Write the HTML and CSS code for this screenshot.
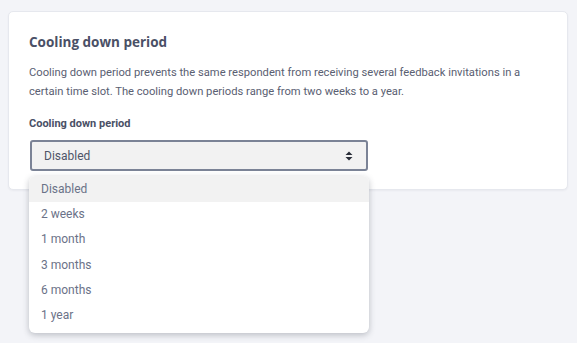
FILE: index.html
```html
<!DOCTYPE html>
<html>
<head>
<meta charset="utf-8">
<link rel="stylesheet" href="styles.css">
</head>
<body>
<div class="page">
  <section class="card">
    <h2 class="title">Cooling down period</h2>
    <p class="desc">Cooling down period prevents the same respondent from receiving several feedback invitations in a certain time slot. The cooling down periods range from two weeks to a year.</p>
    <div class="field">
      <label class="label">Cooling down period</label>
      <div class="select-wrap">
        <div class="select">
          <span class="select-value">Disabled</span>
          <svg class="caret" width="8" height="10" viewBox="0 0 8 10"><path d="M4 0.5L7.5 4H0.5Z M4 9.5L7.5 6H0.5Z" fill="#2b2f3a"/></svg>
        </div>
        <ul class="menu">
          <li class="opt active">Disabled</li>
          <li class="opt">2 weeks</li>
          <li class="opt">1 month</li>
          <li class="opt">3 months</li>
          <li class="opt">6 months</li>
          <li class="opt">1 year</li>
        </ul>
      </div>
    </div>
  </section>
</div>
</body>
</html>
```

FILE: styles.css
```css
html, body {
  margin: 0;
  padding: 0;
  background: #f3f4f8;
  height: 100%;
}
.page {
  padding: 11px 9px 0 8px;
}
.card {
  background: #fff;
  border: 1px solid #e6e8ee;
  border-radius: 5px;
  box-shadow: 0 1px 2px rgba(30, 40, 70, 0.05);
  padding: 21px 20px 18px 20px;
  height: 138px;
}
.title {
  margin: 0;
  font-family: "Open Sans", sans-serif;
  font-weight: 700;
  font-size: 13.5px;
  line-height: 18px;
  color: #4a5066;
}
.desc {
  margin: 12px 0 0 0;
  max-width: 500px;
  font-family: Roboto, sans-serif;
  font-size: 11.2px;
  line-height: 19px;
  color: #5a6072;
}
.field {
  margin-top: 16px;
}
.label {
  display: block;
  font-family: Roboto, sans-serif;
  font-weight: 700;
  font-size: 11px;
  line-height: 14px;
  color: #4a5066;
}
.select-wrap {
  position: relative;
  margin-top: 9px;
  width: 339px;
}
.select {
  box-sizing: border-box;
  height: 31px;
  border: 2px solid #7b8396;
  border-radius: 3px;
  background: #f2f2f2;
  display: flex;
  align-items: center;
  justify-content: space-between;
  padding: 0 13px 0 12px;
  margin-left: 1px;
}
.select-value {
  font-family: Roboto, sans-serif;
  font-size: 12px;
  color: #4f5568;
}
.caret {
  display: block;
}
.menu {
  position: absolute;
  top: 36px;
  left: 0;
  width: 340px;
  margin: 0;
  padding: 0 0 5px 0;
  list-style: none;
  background: #fff;
  border-radius: 6px;
  box-shadow: 0 2px 6px rgba(40, 45, 60, 0.28);
  overflow: hidden;
}
.opt {
  height: 25.3px;
  line-height: 25.3px;
  padding-left: 12px;
  font-family: Roboto, sans-serif;
  font-size: 12px;
  color: #6b7288;
}
.opt.active {
  background: #f2f2f2;
  height: 26px;
  line-height: 26px;
}
```
